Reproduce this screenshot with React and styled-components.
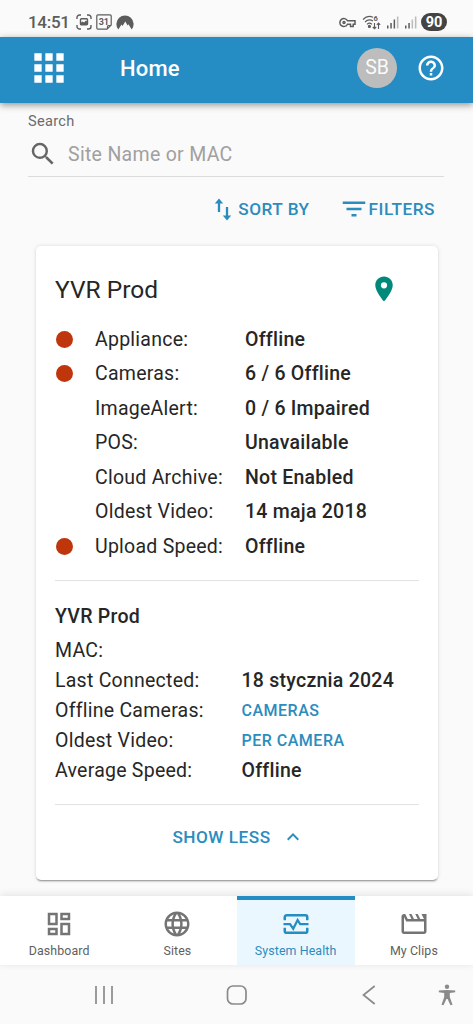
import React, { useState } from 'react';
import styled, { createGlobalStyle } from 'styled-components';
import {
  MdApps,
  MdHelpOutline,
  MdSearch,
  MdFilterList,
  MdPlace,
  MdKeyboardArrowUp,
  MdKeyboardArrowDown,
  MdOutlineDashboard,
  MdLanguage,
  MdOutlineMovieCreation,
} from 'react-icons/md';

const GlobalStyle = createGlobalStyle`
  * {
    box-sizing: border-box;
  }

  body {
    margin: 0;
    background: #fafafa;
    color: #262626;
    font-family: Roboto, "Noto Sans", sans-serif;
  }

  button {
    font-family: inherit;
    background: none;
    border: none;
    padding: 0;
    cursor: pointer;
  }

  svg {
    display: block;
    flex-shrink: 0;
  }
`;

const Screen = styled.div`
  display: flex;
  flex-direction: column;
  width: 473px;
  height: 1024px;
  overflow: hidden;
`;

const StatusBar = styled.div`
  display: flex;
  align-items: center;
  flex: 0 0 37px;
  padding: 7px 26px 0 28px;
  color: #5c5c5c;
`;

const Clock = styled.span`
  width: 48px;
  font-size: 17px;
  font-weight: 500;
  letter-spacing: -0.3px;
  white-space: nowrap;
`;

const StatusIcons = styled.div`
  display: flex;
  align-items: center;
  gap: ${props => props.$gap}px;
  margin-left: ${props => props.$push ? 'auto' : '0'};
`;

const Battery = styled.span`
  width: 26px;
  height: 18px;
  margin-left: -2px;
  border-radius: 9px;
  background: #444;
  color: white;
  font-size: 14.5px;
  font-weight: 700;
  line-height: 19px;
  text-align: center;
`;

const Header = styled.header`
  display: flex;
  align-items: center;
  flex: 0 0 66px;
  padding: 0 27px 4px 27px;
  background: #258dc3;
  color: white;
  box-shadow: 0 2px 7px rgba(0, 0, 0, 0.42);
  z-index: 1;
`;

const HeaderTitle = styled.h1`
  flex: 1;
  margin: 0 0 0 49px;
  font-size: 22px;
  font-weight: 500;
  letter-spacing: 0.2px;
`;

const Avatar = styled.div`
  width: 40px;
  height: 40px;
  margin-right: 19px;
  border-radius: 50%;
  background: #bdbdbd;
  color: #fafafa;
  font-size: 19.5px;
  line-height: 40px;
  text-align: center;
`;

const Main = styled.main`
  flex: 1;
  padding: 9px 29px 0 28px;
`;

const SearchLabel = styled.label`
  display: block;
  color: #6b6b6b;
  font-size: 14.6px;
  line-height: 18px;
  letter-spacing: 0.3px;
`;

const SearchField = styled.div`
  display: flex;
  align-items: center;
  height: 47px;
  gap: 10px;
  padding-top: 2px;
  border-bottom: 1px solid #dcdcdc;
  color: #666;

  input {
    flex: 1;
    padding: 0;
    border: none;
    outline: none;
    background: none;
    font-family: inherit;
    font-size: 19.5px;
    letter-spacing: 0.3px;
    color: #262626;
  }

  input::placeholder {
    color: #a0a0a0;
    opacity: 1;
  }
`;

const Toolbar = styled.div`
  display: flex;
  justify-content: flex-end;
  gap: 29px;
  height: 69px;
  padding: 0 9px 5px 0;
`;

const TextButton = styled.button`
  display: flex;
  align-items: center;
  gap: ${props => props.$gap || 0}px;
  color: #2b8cbe;
  font-size: 17.2px;
  font-weight: 500;
  letter-spacing: 0.5px;
`;

const Card = styled.section`
  width: 402px;
  height: 634px;
  margin-left: 8px;
  padding: 23px 19px 0;
  border-radius: 5px;
  background: white;
  box-shadow: 0 2px 2px -1px rgba(0, 0, 0, 0.42), 0 0 4px rgba(0, 0, 0, 0.12);
`;

const CardHeader = styled.div`
  display: flex;
  align-items: center;
  justify-content: space-between;
  height: 40px;
  padding-right: 20px;
`;

const CardTitle = styled.h2`
  margin: 0;
  font-size: 24.5px;
  font-weight: 400;
  letter-spacing: 0;
`;

const StatusList = styled.div`
  padding: 13px 0 16px;
  border-bottom: 1px solid #e2e2e2;
`;

const StatusRow = styled.div`
  display: grid;
  grid-template-columns: 40px 150px 1fr;
  align-items: center;
  height: 34.5px;
  font-size: 19.5px;
  letter-spacing: 0.25px;
`;

const StatusDot = styled.span`
  width: 17px;
  height: 17px;
  margin-left: 1.4px;
  border-radius: 50%;
  background: ${props => props.$offline ? '#bf360c' : 'transparent'};
`;

const Value = styled.span`
  font-weight: 500;
`;

const Details = styled.div`
  padding: 18px 0;
  border-bottom: 1px solid #e2e2e2;
`;

const DetailsTitle = styled.h3`
  margin: 0;
  padding-bottom: 2px;
  font-size: 19.5px;
  font-weight: 500;
  line-height: 35px;
  letter-spacing: 0.25px;
`;

const DetailRow = styled.div`
  display: grid;
  grid-template-columns: 186.5px 1fr;
  align-items: center;
  height: 30px;
  font-size: 19.5px;
  letter-spacing: 0.25px;
`;

const DetailLink = styled.button`
  justify-self: start;
  color: #2b8cbe;
  font-size: 16px;
  font-weight: 500;
  letter-spacing: 0.5px;
`;

const CardFooter = styled.div`
  display: flex;
  justify-content: center;
  height: 65px;
  padding-left: 3px;
`;

const BottomNav = styled.nav`
  display: grid;
  grid-template-columns: repeat(4, 1fr);
  flex: 0 0 69px;
  background: white;
  box-shadow: 0 -1px 8px rgba(0, 0, 0, 0.1);
  z-index: 1;
`;

const NavItem = styled.button`
  display: flex;
  flex-direction: column;
  align-items: center;
  padding-top: 9px;
  border-top: 4px solid ${props => props.$active ? '#258dc3' : 'transparent'};
  background: ${props => props.$active ? '#ebf7fe' : 'white'};
  color: ${props => props.$active ? '#2b8cbe' : '#5f5f5f'};
  font-size: 12.4px;
  line-height: 18px;
  letter-spacing: 0.1px;

  svg {
    margin-bottom: 3px;
    color: ${props => props.$active ? '#258dc3' : '#747474'};
  }
`;

const SystemBar = styled.div`
  display: grid;
  grid-template-columns: repeat(3, 132.5px) 23px;
  align-items: center;
  justify-items: center;
  flex: 0 0 59px;
  padding-left: 38px;
  background: #fafafa;
  color: #8a8a8a;
`;

const CaptureIcon = () => (
  <svg width="16" height="16" viewBox="0 0 16 16" fill="none" stroke="currentColor" strokeWidth="1.4">
    <path d="M1 5V3.5A2.5 2.5 0 0 1 3.5 1H5M11 1h1.5A2.5 2.5 0 0 1 15 3.5V5M15 11v1.5a2.5 2.5 0 0 1-2.5 2.5H11M5 15H3.5A2.5 2.5 0 0 1 1 12.5V11" />
    <rect x="4.5" y="4.8" width="7" height="6" rx="1" />
    <path d="M4.5 9l2-1.5 1.5 1 2-2 1.5 1.5v3h-7z" fill="currentColor" stroke="none" />
  </svg>
);

const CalendarIcon = () => (
  <svg width="16" height="16" viewBox="0 0 16 16" fill="none" stroke="currentColor" strokeWidth="1.2">
    <path d="M2 .8h12a1.2 1.2 0 0 1 1.2 1.2v9L11 15.2H2A1.2 1.2 0 0 1 .8 14V2A1.2 1.2 0 0 1 2 .8z" />
    <path d="M15 11.5h-2.5a1 1 0 0 0-1 1V15" />
    <text x="7.8" y="11" textAnchor="middle" fontSize="9" fontWeight="700" fill="currentColor" stroke="none">31</text>
  </svg>
);

const VpnIcon = () => (
  <svg width="18" height="15" viewBox="0 0 18 15" fill="currentColor">
    <path d="M2.3 14.5A8.6 8.6 0 1 1 15.7 14.5L12.5 9.2 11.6 10.5 9.3 6.6 6.5 11 5.5 9.5z" />
  </svg>
);

const KeyIcon = () => (
  <svg width="17" height="11" viewBox="0 0 17 11" fill="none" stroke="currentColor" strokeWidth="1.5">
    <path d="M8.5 3.8A4 4 0 1 0 8.5 7.2H11.5V9.5H14.2V7.2H16V3.8z" />
    <circle cx="5" cy="5.5" r="1" />
  </svg>
);

const WifiIcon = () => (
  <svg width="19" height="15" viewBox="0 0 19 15" fill="none" stroke="currentColor" strokeWidth="1.1">
    <path d="M1 4.5C4 1.3 8 .8 11 2.2M3 7c2.3-2.3 5.5-2.6 8-1M5 9.4c1.5-1.5 3.5-1.5 5 0" />
    <circle cx="7.4" cy="11.4" r="1" fill="currentColor" />
    <path d="M12.5 8v5.5M10.8 12l1.7 1.7 1.7-1.7M16.5 14V8M14.8 9.8l1.7-1.7 1.7 1.7" />
    <text x="11.5" y="6" fontSize="7.5" fontWeight="700" fill="currentColor" stroke="none">6</text>
  </svg>
);

const SignalIcon = ({ bars }) => (
  <svg width="12" height="13" viewBox="0 0 12 13" fill="currentColor">
    {[3, 5.5, 9, 12].map((height, index) => (
      <rect
        key={height}
        x={index * 3.3}
        y={12.5 - height}
        width="1.5"
        height={height}
        opacity={index < bars ? 1 : 0.4}
      />
    ))}
  </svg>
);

const SortIcon = () => (
  <svg width="18" height="23" viewBox="0 0 18 23" fill="none" stroke="currentColor" strokeWidth="2.3">
    <path d="M5 14V4M13 9v10" />
    <path d="M5 .6l4.2 5H.8zM13 22.4l4.2-5H8.800z" fill="currentColor" stroke="none" />
  </svg>
);

const HealthIcon = () => (
  <svg width="30" height="30" viewBox="0 0 24 24" fill="none" stroke="currentColor" strokeWidth="2">
    <path d="M3 9V6.5A1.5 1.5 0 0 1 4.5 5h15A1.5 1.5 0 0 1 21 6.5V9M3 15v2.5A1.5 1.5 0 0 0 4.5 19h15a1.5 1.5 0 0 0 1.5-1.5V15" />
    <path d="M2 12h5.2l2.6 3.8L13.3 8.800l2 3.200H22" strokeWidth="1.8" />
  </svg>
);

const RecentsIcon = () => (
  <svg width="20" height="20" viewBox="0 0 20 20" stroke="currentColor" strokeWidth="1.7">
    <path d="M2 1v18M10 1v18M18 1v18" />
  </svg>
);

const HomeIcon = () => (
  <svg width="22" height="20" viewBox="0 0 22 20" fill="none" stroke="currentColor" strokeWidth="1.7">
    <rect x="1.5" y="1" width="18.5" height="18" rx="5.5" />
  </svg>
);

const BackIcon = () => (
  <svg width="14" height="20" viewBox="0 0 14 20" fill="none" stroke="currentColor" strokeWidth="1.7">
    <path d="M12.7 1L1.5 10l11.2 9" />
  </svg>
);

const AccessibilityIcon = () => (
  <svg width="18" height="22" viewBox="0 0 18 22" fill="currentColor">
    <circle cx="9" cy="2.8" r="2.2" />
    <path d="M.8 6.5Q9 5.5 17.2 6.5V8.3L11.8 9V13L14.5 20.7 12.5 21.3 9.6 15H8.4L5.5 21.3 3.5 20.7 6.2 13V9L.8 8.3z" />
  </svg>
);

const statuses = [
  { label: 'Appliance:', value: 'Offline', offline: true },
  { label: 'Cameras:', value: '6 / 6 Offline', offline: true },
  { label: 'ImageAlert:', value: '0 / 6 Impaired' },
  { label: 'POS:', value: 'Unavailable' },
  { label: 'Cloud Archive:', value: 'Not Enabled' },
  { label: 'Oldest Video:', value: '14 maja 2018' },
  { label: 'Upload Speed:', value: 'Offline', offline: true },
];

const details = [
  { label: 'MAC:', value: '' },
  { label: 'Last Connected:', value: '18 stycznia 2024' },
  { label: 'Offline Cameras:', link: 'CAMERAS' },
  { label: 'Oldest Video:', link: 'PER CAMERA' },
  { label: 'Average Speed:', value: 'Offline' },
];

const navItems = [
  { label: 'Dashboard', icon: <MdOutlineDashboard size={30} /> },
  { label: 'Sites', icon: <MdLanguage size={30} /> },
  { label: 'System Health', icon: <HealthIcon /> },
  { label: 'My Clips', icon: <MdOutlineMovieCreation size={30} /> },
];

const SiteCard = () => {
  const [expanded, setExpanded] = useState(true);

  return (
    <Card>
      <CardHeader>
        <CardTitle>YVR Prod</CardTitle>
        <MdPlace size={30} color="#00897b" />
      </CardHeader>
      <StatusList>
        {statuses.map((status) => (
          <StatusRow key={status.label}>
            <StatusDot $offline={status.offline} />
            <span>{status.label}</span>
            <Value>{status.value}</Value>
          </StatusRow>
        ))}
      </StatusList>
      {expanded && (
        <Details>
          <DetailsTitle>YVR Prod</DetailsTitle>
          {details.map((detail) => (
            <DetailRow key={detail.label}>
              <span>{detail.label}</span>
              {detail.link
                ? <DetailLink>{detail.link}</DetailLink>
                : <Value>{detail.value}</Value>}
            </DetailRow>
          ))}
        </Details>
      )}
      <CardFooter>
        <TextButton $gap={10} onClick={() => setExpanded(!expanded)}>
          {expanded ? 'SHOW LESS' : 'SHOW MORE'}
          {expanded ? <MdKeyboardArrowUp size={24} /> : <MdKeyboardArrowDown size={24} />}
        </TextButton>
      </CardFooter>
    </Card>
  );
};

const App = () => {
  const [active, setActive] = useState('System Health');

  return (
    <Screen>
      <GlobalStyle />
      <StatusBar>
        <Clock>14:51</Clock>
        <StatusIcons $gap={4}>
          <CaptureIcon />
          <CalendarIcon />
          <VpnIcon />
        </StatusIcons>
        <StatusIcons $gap={6} $push>
          <KeyIcon />
          <WifiIcon />
          <SignalIcon bars={3} />
          <SignalIcon bars={2} />
          <Battery>90</Battery>
        </StatusIcons>
      </StatusBar>

      <Header>
        <MdApps size={44} />
        <HeaderTitle>Home</HeaderTitle>
        <Avatar>SB</Avatar>
        <MdHelpOutline size={30} />
      </Header>

      <Main>
        <SearchLabel htmlFor="search">Search</SearchLabel>
        <SearchField>
          <MdSearch size={30} />
          <input id="search" placeholder="Site Name or MAC" />
        </SearchField>
        <Toolbar>
          <TextButton $gap={6}>
            <SortIcon />
            SORT BY
          </TextButton>
          <TextButton>
            <MdFilterList size={30} />
            FILTERS
          </TextButton>
        </Toolbar>
        <SiteCard />
      </Main>

      <BottomNav>
        {navItems.map((item) => (
          <NavItem
            key={item.label}
            $active={item.label === active}
            onClick={() => setActive(item.label)}
          >
            {item.icon}
            {item.label}
          </NavItem>
        ))}
      </BottomNav>

      <SystemBar>
        <RecentsIcon />
        <HomeIcon />
        <BackIcon />
        <AccessibilityIcon />
      </SystemBar>
    </Screen>
  );
};

export default App;
